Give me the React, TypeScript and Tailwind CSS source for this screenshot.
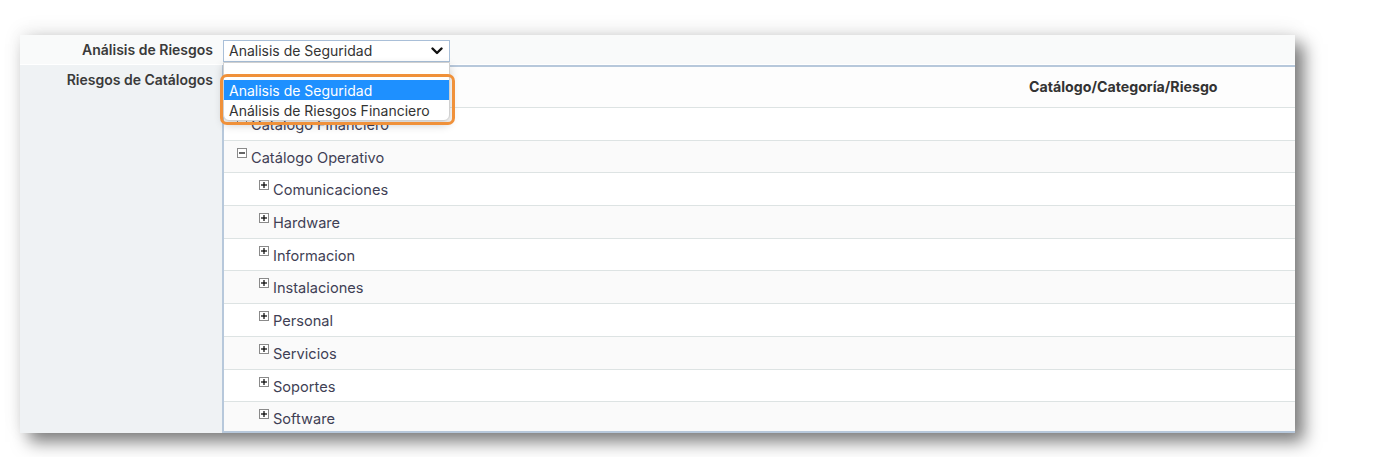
import React from "react";

const font = { fontFamily: "Inter, 'Noto Sans', sans-serif" };

function TreeIcon({ open }: { open: boolean }) {
  return (
    <svg width="10" height="10" viewBox="0 0 10 10" className="shrink-0">
      <rect x="0.5" y="0.5" width="9" height="9" fill="#fff" stroke="#8a8a8a" />
      <line x1="2" y1="5" x2="8" y2="5" stroke="#000" strokeWidth="1.2" />
      {!open && <line x1="5" y1="2" x2="5" y2="8" stroke="#000" strokeWidth="1.2" />}
    </svg>
  );
}

const rows: { label: string; level: number; open: boolean }[] = [
  { label: "Catálogo Financiero", level: 1, open: true },
  { label: "Catálogo Operativo", level: 1, open: true },
  { label: "Comunicaciones", level: 2, open: false },
  { label: "Hardware", level: 2, open: false },
  { label: "Informacion", level: 2, open: false },
  { label: "Instalaciones", level: 2, open: false },
  { label: "Personal", level: 2, open: false },
  { label: "Servicios", level: 2, open: false },
  { label: "Soportes", level: 2, open: false },
  { label: "Software", level: 2, open: false },
];

export default function App() {
  return (
    <div className="relative w-[1378px] h-[457px] bg-white overflow-hidden" style={font}>
      <div className="ml-[20px] mt-[35px] w-[1275px] h-[398px] flex flex-col bg-[#f9fafa] shadow-[9px_9px_16px_rgba(0,0,0,0.5),0_-4px_18px_rgba(0,0,0,0.08)]">
        {/* top row */}
        <div className="flex h-[30px] items-center shrink-0 border-b border-white">
          <div className="w-[202px] pr-[9px] text-right text-[14px] font-semibold text-[#3a3a3a]">
            Análisis de Riesgos
          </div>
          <div className="ml-[1px] w-[227px] h-[22px] mt-[2px] border border-[#a9bfd8] bg-white flex items-center justify-between pl-[5px] pr-[6px]">
            <span className="text-[14px] text-[#333]">Analisis de Seguridad</span>
            <svg width="12" height="10" viewBox="0 0 12 10">
              <path d="M1.5 2.5 L6 7 L10.5 2.5" fill="none" stroke="#111" strokeWidth="2.4" strokeLinecap="round" strokeLinejoin="round" />
            </svg>
          </div>
        </div>
        {/* body */}
        <div className="flex flex-1 min-h-0">
          <div className="w-[202px] bg-[#eff2f4] pt-[4px] pr-[9px] text-right text-[14px] font-semibold text-[#3a3a3a] shrink-0">
            Riesgos de Catálogos
          </div>
          <div className="flex-1 flex flex-col bg-white border-l-2 border-t-2 border-b-2 border-[#b7c8db] overflow-hidden">
            <div className="h-[41px] shrink-0 flex items-center border-b border-[#dde3e3] bg-[#fdfdfd]">
              <div className="ml-[805px] text-[14.2px] font-bold text-[#333]">Catálogo/Categoría/Riesgo</div>
            </div>
            {rows.map((r, i) => (
              <div
                key={r.label}
                className={`h-[32.7px] shrink-0 flex items-start pt-[6px] border-b border-[#dde3e3] ${i % 2 === 1 ? "bg-[#fafafa]" : "bg-white"} ${r.level === 1 ? "pl-[13px]" : "pl-[35px]"}`}
              >
                <span className="mt-[1px]"><TreeIcon open={r.open} /></span>
                <span className="ml-[4px] leading-[20px] pt-[1px] text-[14.6px] text-[#3f3f55]">{r.label}</span>
              </div>
            ))}
          </div>
        </div>
      </div>

      {/* open dropdown */}
      <div className="absolute left-[223px] top-[62px] w-[227px] bg-white border border-[#d0d0d0] rounded-b-[6px] shadow-[0_4px_10px_rgba(0,0,0,0.2)]">
        <div className="h-[17px]" />
        <div className="h-[20px] bg-[#1e90ff] text-white text-[14px] pl-[5px] flex items-center">Analisis de Seguridad</div>
        <div className="h-[20px] text-[#333] text-[14px] pl-[5px] flex items-center">Análisis de Riesgos Financiero</div>
      </div>
      {/* annotation */}
      <div className="absolute left-[220px] top-[74px] w-[235px] h-[51px] border-[3px] border-[#f0913a] rounded-[7px]" />
    </div>
  );
}
